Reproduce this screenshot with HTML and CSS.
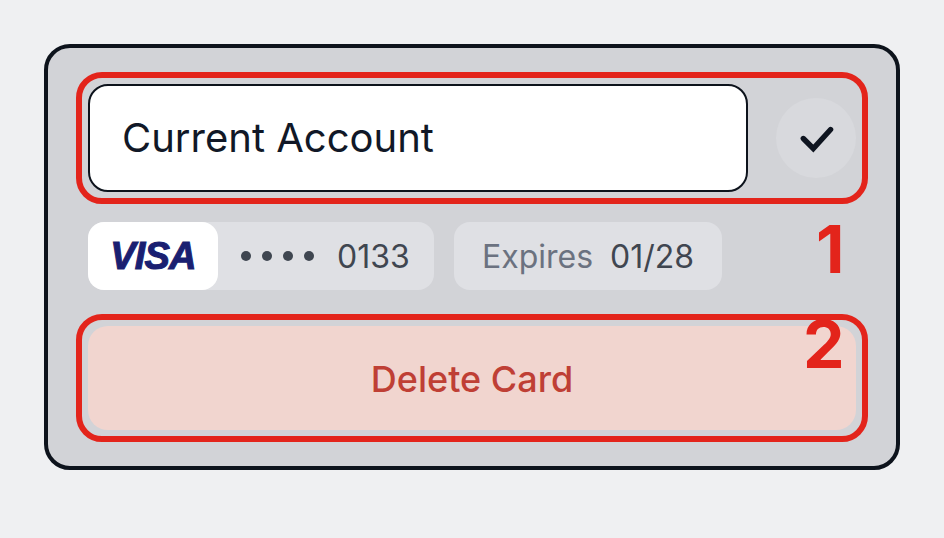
FILE: index.html
```html
<!DOCTYPE html>
<html>
<head>
    <meta charset="utf-8">
    <title>Card</title>
    <link rel="stylesheet" href="styles.css">
</head>
<body>
    <div class="card">
        <div class="name-row">
            <div class="name-input">Current Account</div>
            <div class="check-btn">
                <svg width="40" height="40" viewBox="0 0 40 40" fill="none">
                    <path d="M7.3 20.5 L17.3 30.5 L34.6 11.5" stroke="#0f1520" stroke-width="5.4" stroke-linecap="round" stroke-linejoin="miter"/>
                </svg>
            </div>
        </div>
        <div class="info-row">
            <div class="pill number-pill">
                <div class="brand"><span class="visa">VISA</span></div>
                <span class="dots">
                    <i></i><i></i><i></i><i></i>
                </span>
                <span class="digits">0133</span>
            </div>
            <div class="pill expires-pill">
                <span class="muted">Expires</span>
                <span class="digits">01/28</span>
            </div>
        </div>
        <div class="delete-btn">Delete Card</div>

        <!-- annotations on top of the card -->
        <div class="mark mark-one"></div>
        <div class="mark mark-two"></div>
        <div class="num num-one">1</div>
        <div class="num num-two">2</div>
    </div>
</body>
</html>
```

FILE: styles.css
```css
body{
    margin:0;
    background-color:#eff0f2;
    font-family:Inter,"Liberation Sans",sans-serif;
}
.card{
    position:relative;
    box-sizing:border-box;
    width:856px;
    height:426px;
    margin:44px;
    padding:36px 40px;
    background-color:#d2d3d7;
    border:4px solid #0d131c;
    border-radius:26px;
}
.name-row{
    display:flex;
    align-items:center;
    gap:28px;
}
.name-input{
    box-sizing:border-box;
    width:660px;
    height:108px;
    padding-left:32px;
    background-color:#ffffff;
    border:2px solid #0d131c;
    border-radius:20px;
    color:#111827;
    font-size:40px;
    line-height:104px;
}
.check-btn{
    width:80px;
    height:80px;
    border-radius:50%;
    background-color:#d8d9dd;
    display:flex;
    align-items:center;
    justify-content:center;
}
.info-row{
    display:flex;
    gap:20px;
    margin-top:30px;
    height:68px;
}
.pill{
    display:flex;
    align-items:center;
    background-color:#dfe0e4;
    border-radius:16px;
    font-size:32px;
    color:#3f4650;
}
.number-pill{
    width:346px;
}
.expires-pill{
    width:268px;
    padding-left:28px;
    box-sizing:border-box;
    gap:17px;
}
.brand{
    width:130px;
    height:68px;
    background-color:#ffffff;
    border-radius:16px;
    display:flex;
    align-items:center;
    justify-content:center;
}
.visa{
    color:#1a1f71;
    font-family:"Liberation Sans",sans-serif;
    font-size:38px;
    font-weight:700;
    font-style:italic;
    letter-spacing:-0.8px;
    -webkit-text-stroke:1.1px #1a1f71;
}
.dots{
    display:flex;
    gap:11px;
    margin-left:23px;
    margin-right:23px;
}
.dots i{
    display:block;
    width:10px;
    height:10px;
    border-radius:50%;
    background-color:#3f4650;
}
.muted{
    color:#6b7280;
}
.delete-btn{
    margin-top:36px;
    height:104px;
    background-color:#f1d5cf;
    border-radius:20px;
    color:#bf3f35;
    font-size:36px;
    font-weight:500;
    line-height:107px;
    text-align:center;
}
.mark{
    position:absolute;
    left:28px;
    width:792px;
    box-sizing:border-box;
    border:6px solid #e3241b;
    border-radius:26px;
}
.mark-one{
    top:24px;
    height:132px;
}
.mark-two{
    top:266px;
    height:128px;
}
.num{
    position:absolute;
    color:#e3241b;
    font-size:66px;
    font-weight:700;
    line-height:72px;
}
.num-one{
    left:768px;
    top:165px;
}
.num-two{
    left:755px;
    top:260px;
}
```
